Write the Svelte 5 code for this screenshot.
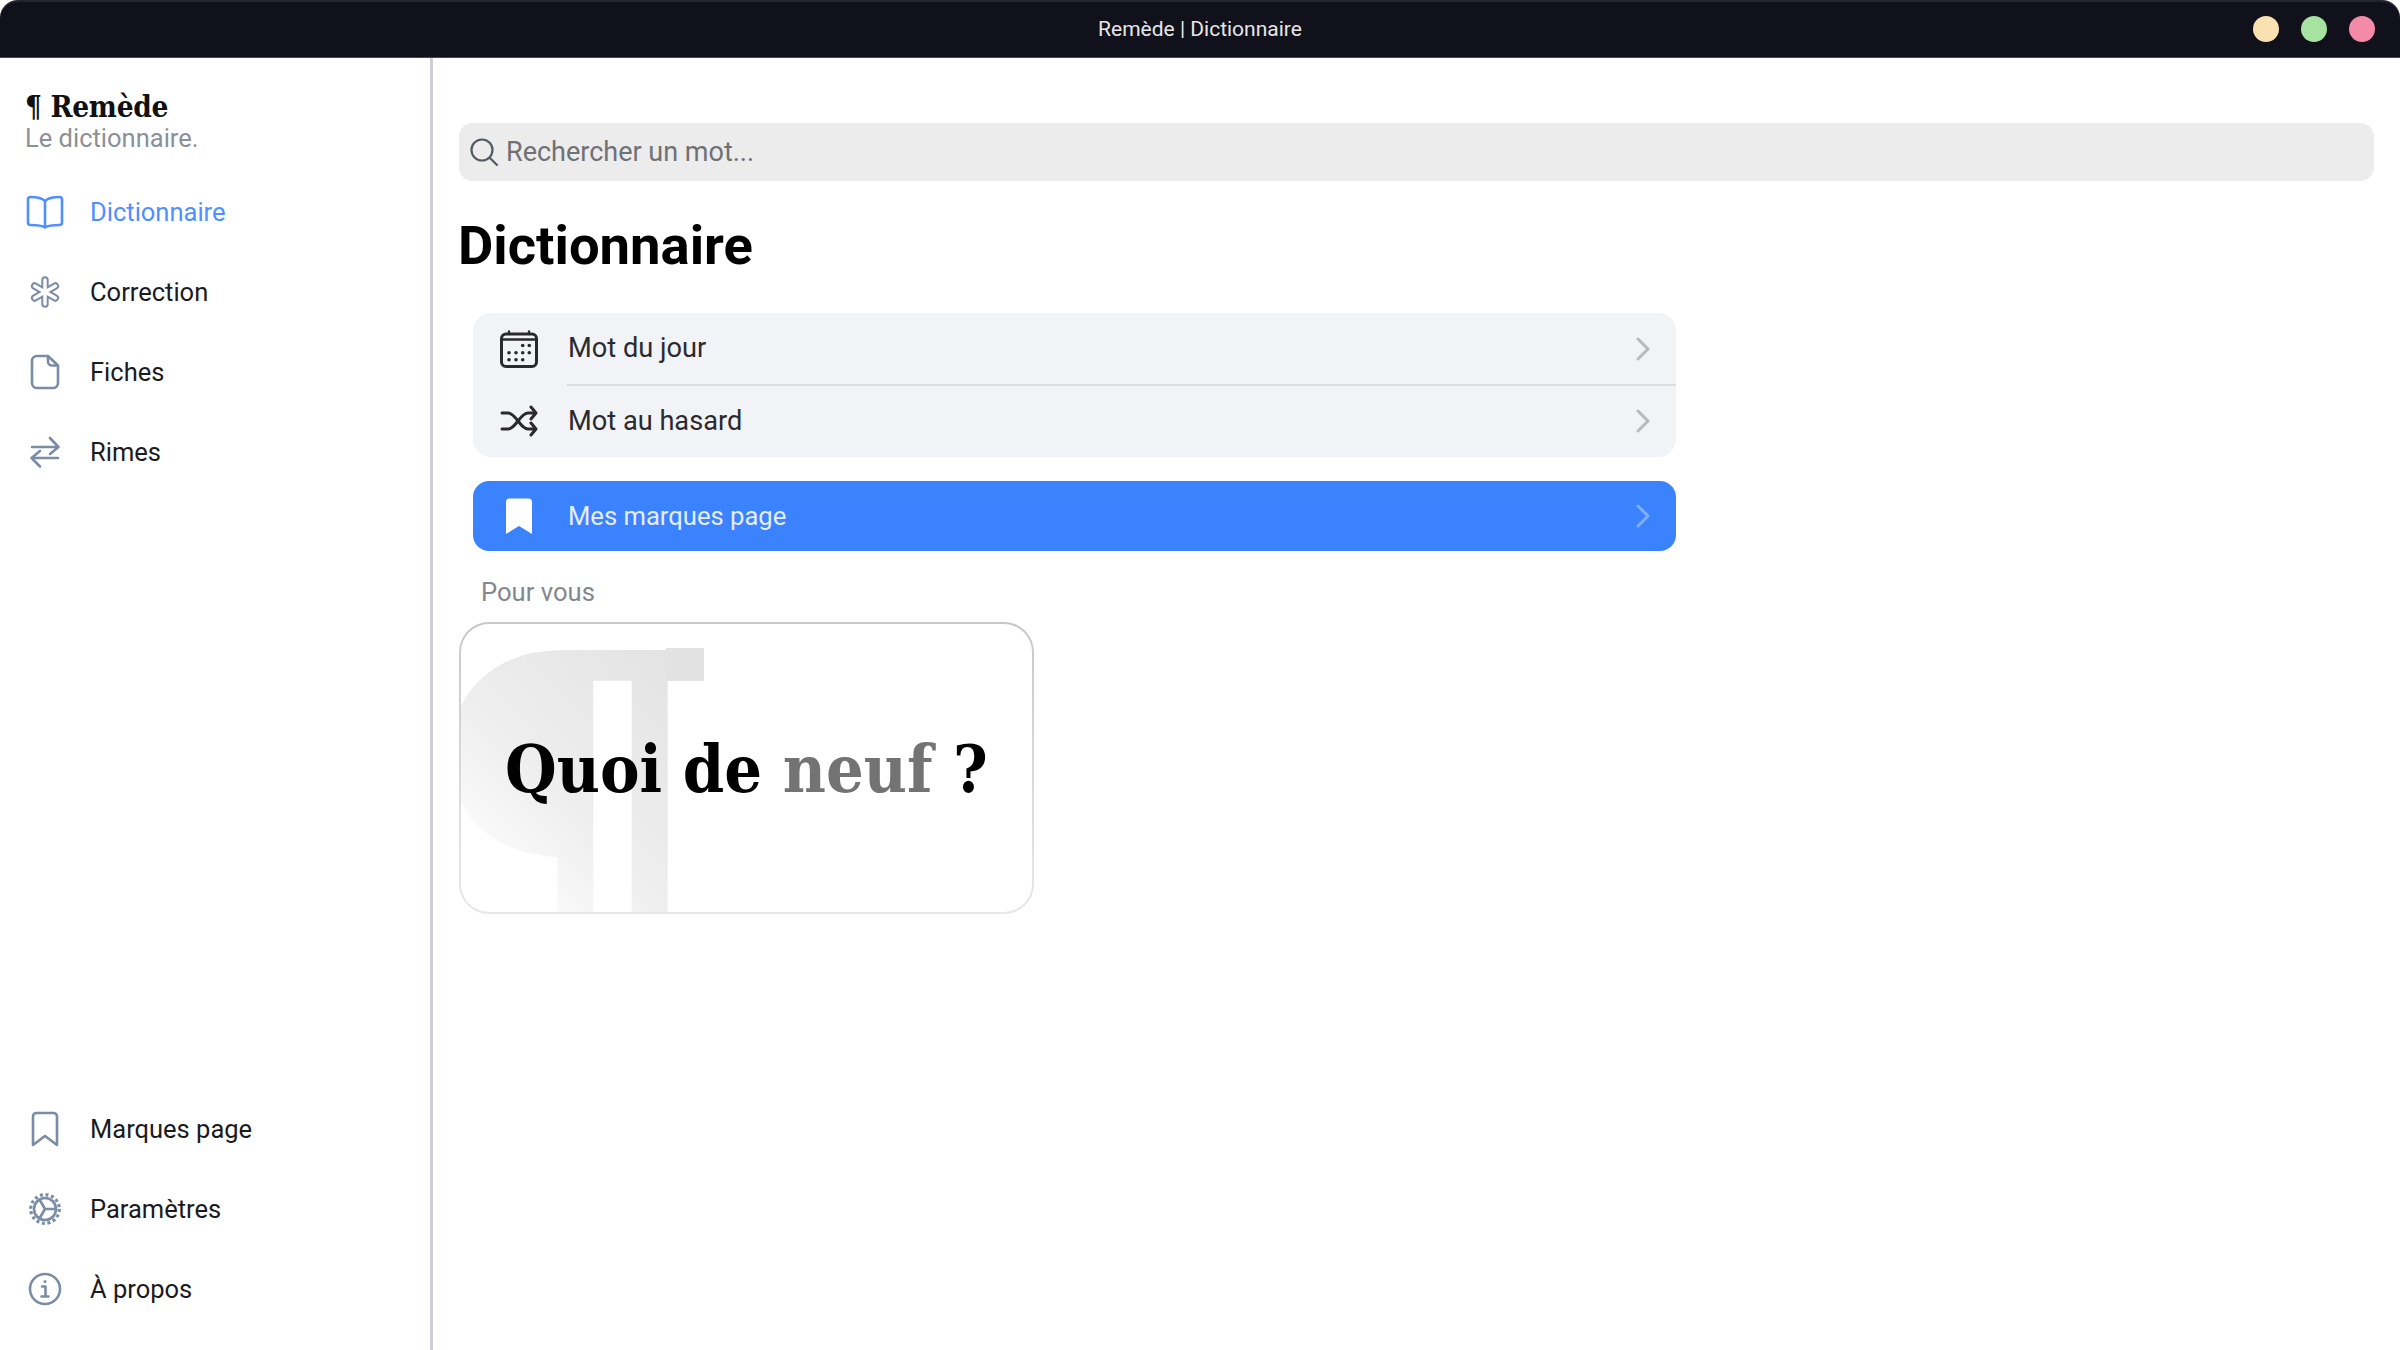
<script>
	const topNav = [
		{ label: 'Dictionnaire', icon: 'book', active: true },
		{ label: 'Correction', icon: 'asterisk' },
		{ label: 'Fiches', icon: 'file' },
		{ label: 'Rimes', icon: 'swap' }
	];
	const bottomNav = [
		{ label: 'Marques page', icon: 'bookmark' },
		{ label: 'Paramètres', icon: 'gear' },
		{ label: 'À propos', icon: 'info' }
	];
	const spokes = [0, 60, 120];
	const calendarDots = [
		[22.7, 15.5], [29.3, 15.5],
		[9, 22.8], [16, 22.8], [22.7, 22.8], [29.3, 22.8],
		[9, 29.8], [16, 29.8], [22.7, 29.8]
	];
</script>

{#snippet navIcon(name)}
	<svg class="nav-icon" viewBox="0 0 38 38" fill="none" stroke="currentColor" stroke-width="2.6" stroke-linecap="round" stroke-linejoin="round">
		{#if name === 'book'}
			<path d="M19 8C16 5 12 4 4.500 4A2.500 2.500 0 0 0 2 6.500V29.500A2.500 2.500 0 0 0 4.500 32C12 32 16 32.500 19 34.500C22 32.500 26 32 33.500 32A2.500 2.500 0 0 0 36 29.500V6.500A2.500 2.500 0 0 0 33.500 4C26 4 22 5 19 8ZM19 8V34.500" />
		{:else if name === 'asterisk'}
			<g stroke-width="7.4">
				{#each spokes as a}
					<line x1="19" y1="7" x2="19" y2="31" transform="rotate({a} 19 19)" />
				{/each}
			</g>
			<g stroke="#fff" stroke-width="3.4">
				{#each spokes as a}
					<line x1="19" y1="7" x2="19" y2="31" transform="rotate({a} 19 19)" />
				{/each}
			</g>
		{:else if name === 'file'}
			<path d="M22 3H11A5 5 0 0 0 6 8V30A5 5 0 0 0 11 35H27A5 5 0 0 0 32 30V12.500ZM22 3V8.500A4 4 0 0 0 26 12.500H32" />
		{:else if name === 'swap'}
			<path d="M6 14H32M24 5L32.500 14L24 21M32 25H6M14 18L5.500 25L14 33.500" />
		{:else if name === 'bookmark'}
			<path d="M7 6.500A3.500 3.500 0 0 1 10.500 3H27.500A3.500 3.500 0 0 1 31 6.500V35L19 26L7 35Z" />
		{:else if name === 'gear'}
			<circle cx="19" cy="19" r="11" />
			<circle cx="19" cy="19" r="14.300" stroke-width="3.200" stroke-linecap="butt" stroke-dasharray="3 2.620" />
			<path d="M19 19H30M19 19L13.500 9.500M19 19L13.500 28.500" />
		{:else if name === 'info'}
			<circle cx="19" cy="19" r="15" />
			<circle cx="19" cy="11.500" r="1.500" fill="currentColor" stroke="none" />
			<path d="M16 16.500H19.500V26M15.500 26.500H22.500" />
		{/if}
	</svg>
{/snippet}

{#snippet chevron()}
	<svg class="chevron" viewBox="0 0 14 24" fill="none" stroke="currentColor" stroke-width="3" stroke-linecap="round" stroke-linejoin="round">
		<path d="M2 2L12 12L2 22" />
	</svg>
{/snippet}

<div class="window">
	<header class="titlebar">
		<span></span>
		<span class="title">Remède | Dictionnaire</span>
		<div class="dots">
			<i class="dot yellow"></i>
			<i class="dot green"></i>
			<i class="dot pink"></i>
		</div>
	</header>

	<div class="body">
		<aside class="sidebar">
			<div class="brand">
				<div class="logo">¶ Remède</div>
				<div class="tagline">Le dictionnaire.</div>
			</div>
			<nav>
				{#each topNav as item}
					<a class="nav-item" class:active={item.active} href="#top">
						{@render navIcon(item.icon)}
						<span>{item.label}</span>
					</a>
				{/each}
			</nav>
			<nav class="bottom">
				{#each bottomNav as item}
					<a class="nav-item" href="#top">
						{@render navIcon(item.icon)}
						<span>{item.label}</span>
					</a>
				{/each}
			</nav>
		</aside>

		<main>
			<label class="search">
				<svg viewBox="0 0 30 30" fill="none" stroke="#55585e" stroke-width="2.200" stroke-linecap="round">
					<circle cx="13" cy="13" r="10.500" />
					<path d="M21 21L28 28" />
				</svg>
				<input type="text" placeholder="Rechercher un mot..." />
			</label>

			<h1>Dictionnaire</h1>

			<div class="list">
				<a class="row" href="#top">
					<svg class="row-icon" viewBox="0 0 38 38" fill="none" stroke="currentColor" stroke-width="3" stroke-linecap="round" stroke-linejoin="round">
						<rect x="1.500" y="4" width="35" height="32.500" rx="4.500" />
						<path d="M1.500 9.500H36.500M9 1.500V4M29 1.500V4" stroke-width="2.400" />
						{#each calendarDots as d}
							<circle cx={d[0]} cy={d[1]} r="1.800" fill="currentColor" stroke="none" />
						{/each}
					</svg>
					<span>Mot du jour</span>
					{@render chevron()}
				</a>
				<a class="row" href="#top">
					<svg class="row-icon" viewBox="0 0 38 38" fill="none" stroke="currentColor" stroke-width="3" stroke-linecap="round" stroke-linejoin="round">
						<path d="M2 11H8C16 11 20 27 28 27H35M2 27H8C16 27 20 11 28 11H35M31 5L36 11L31 17M31 21L36 27L31 33" />
					</svg>
					<span>Mot au hasard</span>
					{@render chevron()}
				</a>
			</div>

			<a class="row highlight" href="#top">
				<svg class="row-icon" viewBox="0 0 38 38" fill="#fff">
					<path d="M6 5A3.500 3.500 0 0 1 9.500 1.500H28.500A3.500 3.500 0 0 1 32 5V37L19 29L6 37Z" />
				</svg>
				<span>Mes marques page</span>
				{@render chevron()}
			</a>

			<div class="section-title">Pour vous</div>

			<div class="card">
				<span class="pilcrow" aria-hidden="true">¶</span>
				<i class="pilcrow-bar"></i>
				<div class="headline">Quoi de <em>neuf</em> ?</div>
			</div>
		</main>
	</div>
</div>

<style>
	:global(body) {
		background: #fff;
		font-family: Roboto, sans-serif;
	}

	.window {
		display: flex;
		flex-direction: column;
		height: 1350px;
		overflow: hidden;
	}

	.titlebar {
		flex: none;
		display: grid;
		grid-template-columns: 1fr auto 1fr;
		align-items: center;
		box-sizing: border-box;
		height: 58px;
		padding-bottom: 2px;
		background: #11111b;
		border-top: 2px solid #24252e;
		border-bottom: 1px solid #45475a;
		border-radius: 18px 18px 0 0;
		color: #e6e6ea;
		font-size: 21px;
	}

	.dots {
		display: flex;
		justify-content: flex-end;
		gap: 22px;
		padding-right: 25px;
	}

	.dot {
		width: 26px;
		height: 26px;
		border-radius: 50%;
	}

	.yellow { background: #f9e2af; }
	.green { background: #a6e3a1; }
	.pink { background: #f38ba8; }

	.body {
		flex: 1;
		display: flex;
		min-height: 0;
	}

	.sidebar {
		flex: none;
		display: flex;
		flex-direction: column;
		box-sizing: border-box;
		width: 433px;
		padding: 31px 0 21px 25px;
		border-right: 3px solid #cdd0d6;
	}

	.brand {
		height: 83px;
	}

	.logo {
		font-family: "DejaVu Serif Condensed", "DejaVu Serif", serif;
		font-weight: 700;
		font-size: 29.5px;
		line-height: 36px;
		letter-spacing: -0.3px;
		color: #111;
	}

	.tagline {
		font-size: 25.5px;
		line-height: 28px;
		margin-top: -1px;
		color: #8c9097;
	}

	nav {
		padding-left: 1px;
	}

	nav.bottom {
		margin-top: auto;
	}

	.nav-item {
		display: flex;
		align-items: center;
		gap: 26px;
		height: 80px;
		font-size: 25.5px;
		color: #1b1b1f;
		text-decoration: none;
	}

	.nav-item.active {
		color: #4f8fff;
	}

	.nav-icon {
		width: 38px;
		height: 38px;
		color: #7a8ca6;
	}

	.active .nav-icon {
		color: #4f8fff;
	}

	main {
		flex: 1;
		min-width: 0;
		box-sizing: border-box;
		padding: 65px 26px 0 26px;
	}

	.search {
		display: flex;
		align-items: center;
		gap: 7px;
		box-sizing: border-box;
		height: 58px;
		padding: 0 12px 0 10px;
		background: #ececec;
		border-radius: 14px;
	}

	.search svg {
		width: 30px;
		height: 30px;
		flex: none;
	}

	.search input {
		flex: 1;
		border: none;
		background: none;
		outline: none;
		padding: 0;
		font-family: Roboto, sans-serif;
		font-size: 27px;
		color: #222;
	}

	.search input::placeholder {
		color: #6f7175;
		opacity: 1;
	}

	h1 {
		margin: 35px 0 37px -1px;
		font-size: 54.4px;
		line-height: 60px;
		font-weight: 700;
		color: #000;
	}

	.list {
		width: 1203px;
		margin-left: 14px;
		background: #f2f3f7;
		border-radius: 18px;
		overflow: hidden;
	}

	.row {
		display: flex;
		align-items: center;
		gap: 30px;
		box-sizing: border-box;
		height: 72px;
		padding: 0 26px 0 27px;
		font-size: 27.2px;
		color: #2a2a2e;
		text-decoration: none;
	}

	.row span {
		flex: 1;
	}

	.list .row + .row {
		position: relative;
	}

	.list .row:first-child span {
		padding-bottom: 3px;
	}

	.list .row + .row::before {
		content: '';
		position: absolute;
		top: -1px;
		left: 94px;
		right: 0;
		height: 2px;
		background: #dcdde1;
	}

	.row-icon {
		flex: none;
		width: 38px;
		height: 38px;
	}

	.chevron {
		flex: none;
		width: 14px;
		height: 24px;
		color: #b9babd;
	}

	.highlight {
		width: 1203px;
		height: 70px;
		margin: 24px 0 0 14px;
		background: #3b82ff;
		border-radius: 16px;
		font-size: 25.6px;
		color: #e4edff;
	}

	.highlight .chevron {
		color: #7fadff;
	}

	.section-title {
		margin: 26px 0 0 22px;
		font-size: 25.6px;
		line-height: 30px;
		color: #85878b;
	}

	.card {
		position: relative;
		display: flex;
		align-items: center;
		justify-content: center;
		box-sizing: border-box;
		width: 575px;
		height: 292px;
		margin-top: 15px;
		padding-top: 2px;
		border: 2px solid transparent;
		border-radius: 30px;
		overflow: hidden;
		background:
			linear-gradient(#fff, #fff) padding-box,
			linear-gradient(180deg, #c8c8c8, #dcdcdc 60%, #e8e8e8) border-box;
	}

	.pilcrow {
		position: absolute;
		left: -45px;
		top: 3px;
		font-family: "DejaVu Serif", serif;
		font-weight: 700;
		font-size: 484px;
		line-height: 0.85;
		transform: scaleY(1.04);
		transform-origin: top left;
		background: linear-gradient(45deg, #ffffff 30%, #eeeeee 55%, #e2e2e2 92%);
		-webkit-background-clip: text;
		background-clip: text;
		color: transparent;
	}

	.pilcrow-bar {
		position: absolute;
		left: 205px;
		top: 24px;
		width: 38px;
		height: 33px;
		background: #e2e2e2;
	}

	.headline {
		position: relative;
		font-family: "DejaVu Serif Condensed", "DejaVu Serif", serif;
		font-weight: 700;
		font-size: 66px;
		color: #000;
		white-space: nowrap;
	}

	.headline em {
		font-style: normal;
		color: #737373;
	}
</style>
